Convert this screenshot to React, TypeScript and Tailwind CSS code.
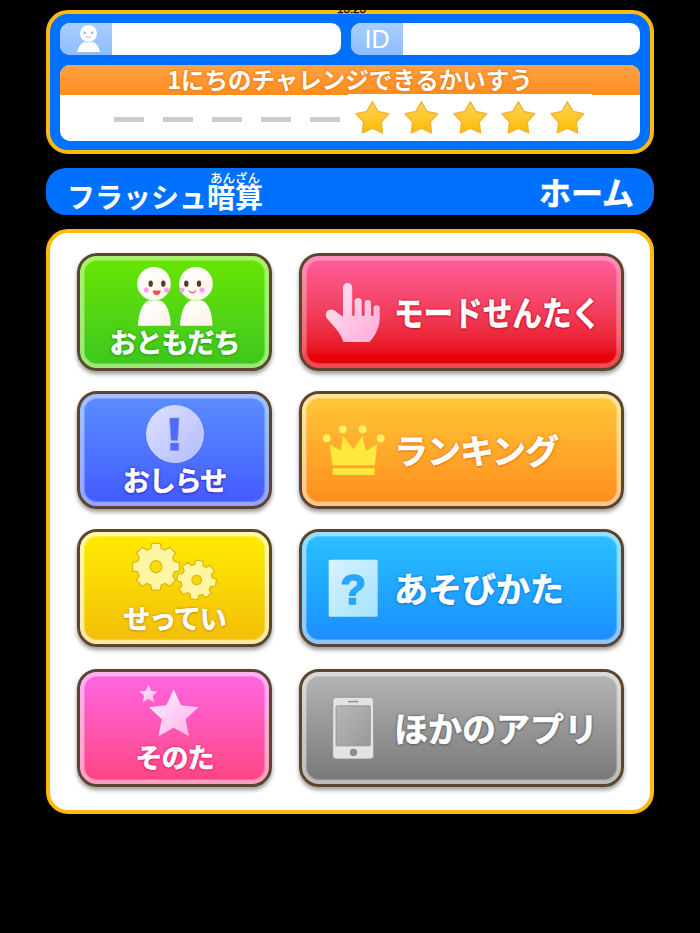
import React from "react";
import clsx from "clsx";

const starPoints = (cx: number, cy: number, r: number, inner = 0.5) =>
  Array.from({ length: 10 }, (_, i) => {
    const radius = i % 2 === 0 ? r : r * inner;
    const angle = (Math.PI / 5) * i - Math.PI / 2;
    return `${(cx + radius * Math.cos(angle)).toFixed(2)},${(cy + radius * Math.sin(angle)).toFixed(2)}`;
  }).join(" ");

const gearPath = (cx: number, cy: number, outer: number, root: number, hole: number, turn = 0) => {
  const points: string[] = [];
  for (let i = 0; i < 8; i++) {
    const mid = ((i * 45 + turn) * Math.PI) / 180;
    const corners = [[root, -0.28], [outer, -0.18], [outer, 0.18], [root, 0.28]];
    corners.forEach(([r, d]) => {
      points.push(`${(cx + r * Math.cos(mid + d)).toFixed(2)} ${(cy + r * Math.sin(mid + d)).toFixed(2)}`);
    });
  }
  return `M${points.join("L")}Z M${cx - hole} ${cy}a${hole} ${hole} 0 1 0 ${hole * 2} 0a${hole} ${hole} 0 1 0 ${-hole * 2} 0Z`;
};

const FriendsIcon = () => (
  <svg viewBox="84 260 181 68" className="h-[68px] w-[181px] shrink-0">
    <defs>
      <linearGradient id="friend" x1="0" y1="0" x2="1" y2="1">
        <stop offset="0.3" stopColor="#fffefc" />
        <stop offset="1" stopColor="#fdf1e2" />
      </linearGradient>
    </defs>
    <g fill="url(#friend)">
      <circle cx="154" cy="283.7" r="16.8" />
      <path d="M138 325.7C138.5 311 144 300.5 150 300.5h8.5C165 300.5 170.5 311 170.7 325.7Z" />
      <circle cx="196" cy="283.7" r="16.8" />
      <path d="M180 325.7C180.5 311 186 300.5 192 300.5h8.5C207 300.5 212.3 311 212.5 325.7Z" />
    </g>
    <g fill="#5c3a22">
      <ellipse cx="150.7" cy="283.7" rx="2.2" ry="3.1" />
      <ellipse cx="163.3" cy="283.7" rx="2.2" ry="3.1" />
      <ellipse cx="186.3" cy="283.7" rx="2.2" ry="3.1" />
      <ellipse cx="199" cy="283.7" rx="2.2" ry="3.1" />
    </g>
    <g fill="#f9a3e6">
      <circle cx="146.3" cy="290" r="2.6" />
      <circle cx="166.7" cy="290" r="2.6" />
      <circle cx="182" cy="290" r="2.6" />
      <circle cx="202" cy="290" r="2.6" />
    </g>
    <path d="M152.7 290.5h8c0 6.200-8 6.200-8 0Z" fill="#f4504c" />
    <path d="M189.3 291c1.500 2.200 4.800 2.200 6.300 0" fill="none" stroke="#f4504c" strokeWidth="1.2" strokeLinecap="round" />
  </svg>
);

const NoticeIcon = () => (
  <svg viewBox="84 398 181 68" className="h-[68px] w-[181px] shrink-0">
    <defs>
      <linearGradient id="notice" x1="0" y1="0" x2="1" y2="1">
        <stop offset="0" stopColor="#dde2ff" />
        <stop offset="1" stopColor="#b3bbff" />
      </linearGradient>
    </defs>
    <circle cx="175" cy="434" r="28.5" fill="url(#notice)" stroke="#d5dbff" strokeWidth="0.8" />
    <path d="M169.6 418h9.500l-1.400 22.500h-6.700ZM170.300 443h8.500v7.500h-8.500Z" fill="#4e6bff" stroke="#8896f0" strokeWidth="0.6" />
  </svg>
);

const GearsIcon = () => (
  <svg viewBox="84 536 181 68" className="h-[68px] w-[181px] shrink-0">
    <g fill="#fff6a4" stroke="#dfb414" strokeWidth="1.2" strokeLinejoin="round" fillRule="evenodd">
      <path d={gearPath(156, 566.7, 23.8, 19, 6)} />
      <path d={gearPath(196.7, 580, 19.8, 15.6, 4.8, 8)} />
    </g>
  </svg>
);

const OthersIcon = () => (
  <svg viewBox="84 676 181 68" className="h-[68px] w-[181px] shrink-0">
    <defs>
      <linearGradient id="others" x1="0" y1="0" x2="1" y2="1">
        <stop offset="0.2" stopColor="#ffe4fa" />
        <stop offset="1" stopColor="#ffafea" />
      </linearGradient>
    </defs>
    <polygon points={starPoints(173.7, 715.3, 26, 0.48)} fill="url(#others)" />
    <polygon points={starPoints(148.5, 694.4, 9.6, 0.48)} fill="url(#others)" />
  </svg>
);

const HandIcon = () => (
  <svg viewBox="306 260 84 104" className="h-[104px] w-[84px] shrink-0">
    <defs>
      <linearGradient id="hand" x1="0" y1="0" x2="1" y2="1">
        <stop offset="0.2" stopColor="#ffdcf0" />
        <stop offset="1" stopColor="#ffaad6" />
      </linearGradient>
    </defs>
    <path
      d="M343 316.5V287.500a4.600 4.600 0 0 1 9.200 0V315.800h2.400V301.500a3.600 3.600 0 0 1 7.200 0V315.800h2.800V303.300a3.200 3.200 0 0 1 6.400 0V315.800h2.600V308.300a3 3 0 0 1 6.100 0V318C379.500 328 375 336 369.500 342H343.500C341 335 338 331 334 326.500L327 318.500C324.500 314.500 326.500 309.500 331.500 309.500C336 310 339 315 343 316.500Z"
      fill="url(#hand)"
    />
  </svg>
);

const CrownIcon = () => (
  <svg viewBox="306 398 84 104" className="h-[104px] w-[84px] shrink-0">
    <g fill="#ffea3c" stroke="#f5b82c" strokeWidth="0.5">
      <path d="M329.3 444L340.500 450.500L343 435.500L353.300 449L362.500 435.500L366 450.500L377.300 444L375 465.500H332.500Z" />
      <path d="M332.6 468h42.200v7h-42.200Z" />
      <circle cx="326.7" cy="438.3" r="4.2" fill="#ffee66" />
      <circle cx="342.8" cy="429.3" r="4.2" fill="#ffee66" />
      <circle cx="362.7" cy="429.3" r="4.2" fill="#ffee66" />
      <circle cx="380.7" cy="438.3" r="4.2" fill="#ffee66" />
    </g>
  </svg>
);

const HelpIcon = () => (
  <svg viewBox="306 536 84 104" className="h-[104px] w-[84px] shrink-0">
    <defs>
      <linearGradient id="help" x1="0" y1="0" x2="1" y2="1">
        <stop offset="0" stopColor="#d8f3ff" />
        <stop offset="1" stopColor="#a4e2ff" />
      </linearGradient>
    </defs>
    <rect x="328.7" y="559.8" width="49" height="57" rx="1.5" fill="url(#help)" />
    <text x="353" y="603.5" textAnchor="middle" fontSize="42" fontWeight="bold" fill="#28a6ff" stroke="#28a6ff" strokeWidth="1.4" className="font-['Liberation_Sans',sans-serif]">
      ?
    </text>
  </svg>
);

const PhoneIcon = () => (
  <svg viewBox="306 676 84 104" className="h-[104px] w-[84px] shrink-0">
    <defs>
      <linearGradient id="screen" x1="0" y1="0" x2="1" y2="1">
        <stop offset="0" stopColor="#b8b8b8" />
        <stop offset="1" stopColor="#999999" />
      </linearGradient>
    </defs>
    <rect x="332.7" y="697.3" width="41" height="61.7" rx="3.5" fill="#e3e3e3" stroke="#8b8b8b" strokeWidth="0.8" />
    <rect x="336" y="705.8" width="34.3" height="40" rx="1" fill="url(#screen)" stroke="#8f8f8f" strokeWidth="0.8" />
    <rect x="348" y="700.8" width="10.3" height="1.8" rx="0.9" fill="#999999" />
    <circle cx="353.5" cy="752.5" r="3.7" fill="#8e8e8e" />
  </svg>
);

interface MenuButtonProps {
  label: string;
  icon: React.ReactNode;
  color: string;
  band: string;
  text: string;
  wide?: boolean;
}

const MenuButton: React.FC<MenuButtonProps> = ({ label, icon, color, band, text, wide }) => (
  <button className={clsx("h-[118px] rounded-[20px] border-[3px] border-[#5b452f] bg-linear-to-b shadow-[0_3px_4px_rgba(0,0,0,0.4)]", color)}>
    <span
      className={clsx(
        "flex h-full rounded-[17px] border-4 shadow-[inset_0_0_0_1px_rgba(255,255,255,0.2)]",
        band,
        wide ? "items-center" : "flex-col items-center"
      )}
    >
      {icon}
      <span
        className={clsx(
          "whitespace-nowrap font-bold text-white [-webkit-text-stroke:0.6px_white]",
          text,
          wide ? "ml-1 origin-left text-[34px] leading-[40px]" : "text-[27px] leading-[28px]"
        )}
      >
        {label}
      </span>
    </span>
  </button>
);

const buttons: MenuButtonProps[] = [
  {
    label: "おともだち",
    icon: <FriendsIcon />,
    color: "from-[#68e600] to-[#3cc61b]",
    band: "border-[#c6f5a0]/70",
    text: "tracking-[-1px] [text-shadow:0_0_2px_#249a08,0_0_3px_#249a08,0_1px_2px_#249a08]"
  },
  {
    label: "モードせんたく",
    icon: <HandIcon />,
    color: "from-[#ff5c98] from-5% to-[#e60008] to-90%",
    band: "border-white/30",
    text: "scale-x-[0.87] [text-shadow:0_0_2px_#b80c28,0_0_3px_#b80c28,0_1px_2px_#b80c28]",
    wide: true
  },
  {
    label: "おしらせ",
    icon: <NoticeIcon />,
    color: "from-[#5b8eff] to-[#4458ff]",
    band: "border-white/45",
    text: "tracking-[-1px] [text-shadow:0_0_2px_#3426d8,0_0_3px_#3426d8,0_1px_2px_#3426d8]"
  },
  {
    label: "ランキング",
    icon: <CrownIcon />,
    color: "from-[#ffc838] to-[#ff8b1c]",
    band: "border-white/50",
    text: "tracking-[-1px] [text-shadow:0_0_2px_#ec6c08,0_0_3px_#ec6c08,0_1px_2px_#ec6c08]",
    wide: true
  },
  {
    label: "せってい",
    icon: <GearsIcon />,
    color: "from-[#ffed00] to-[#f2bd08]",
    band: "border-white/65",
    text: "tracking-[-1px] [text-shadow:0_0_2px_#c98a00,0_0_3px_#c98a00,0_1px_2px_#c98a00]"
  },
  {
    label: "あそびかた",
    icon: <HelpIcon />,
    color: "from-[#2bc1ff] to-[#1d8cff]",
    band: "border-white/50",
    text: "[text-shadow:0_0_2px_#0b72dc,0_0_3px_#0b72dc,0_1px_2px_#0b72dc]",
    wide: true
  },
  {
    label: "そのた",
    icon: <OthersIcon />,
    color: "from-[#ff64e4] to-[#ff4280]",
    band: "border-white/50",
    text: "-mt-px tracking-[-1px] [text-shadow:0_0_2px_#e82070,0_0_3px_#e82070,0_1px_2px_#e82070]"
  },
  {
    label: "ほかのアプリ",
    icon: <PhoneIcon />,
    color: "from-[#b6b6b6] to-[#777777]",
    band: "border-white/50",
    text: "[text-shadow:0_0_2px_#5c5c5c,0_0_3px_#5c5c5c,0_1px_2px_#5c5c5c]",
    wide: true
  }
];

const Header: React.FC = () => (
  <header className="relative h-36 rounded-[22px] border-4 border-[#ffb90f] bg-[#0071ff] px-2.5 pt-[9px]">
    <span className="absolute -top-[11px] left-[287px] w-[29px] text-center font-['Liberation_Sans',sans-serif] text-[11.5px] leading-[12px] text-black [-webkit-text-stroke:0.3px_black]">
      13:23
    </span>
    <div className="flex gap-2.5">
      <div className="flex h-8 w-[281px] overflow-hidden rounded-[10px] bg-white">
        <div className="w-[52px] bg-linear-to-b from-[#a7cdff] to-[#8dbdfb]">
          <svg viewBox="60 23 52 32" className="h-8 w-[52px]">
            <circle cx="88.5" cy="33.4" r="8.5" fill="#fff" />
            <path d="M77 52C78.500 45 83 41.800 85.500 41.800h6C95 41.800 98.500 45 100 52Z" fill="#fff" />
            <circle cx="84.8" cy="32.8" r="1.2" fill="#8dbdfb" />
            <circle cx="92" cy="32.8" r="1.2" fill="#8dbdfb" />
            <path d="M86 36.300c1.500 1.500 3.500 1.500 5 0" fill="none" stroke="#8dbdfb" strokeWidth="1" />
            <path d="M83.500 41.300c3 1.500 7 1.500 10 0" fill="none" stroke="#b5d4fd" strokeWidth="0.8" />
          </svg>
        </div>
      </div>
      <div className="flex h-8 w-[289px] overflow-hidden rounded-[10px] bg-white">
        <div className="w-[52px] bg-linear-to-b from-[#a7cdff] to-[#8dbdfb] text-center font-['Liberation_Sans',sans-serif] text-[25px] leading-8 text-white">
          ID
        </div>
      </div>
    </div>

    <div className="mt-2.5 h-[76px] overflow-hidden rounded-[10px] bg-white">
      <div className="h-[30px] bg-linear-to-b from-[#ffa242] to-[#ff8c1c] text-center text-[23.5px] font-bold leading-[29px] text-white [text-shadow:0_0_2px_#e87408,0_0_3px_#e87408]">
        1にちのチャレンジできるかいすう
      </div>
      <div className="-mt-px flex h-[47px] items-center pl-[45px]">
        {[0, 1, 2, 3, 4].map((i) => (
          <div key={i} className="flex w-[48.8px] justify-center pt-1">
            <div className="h-[5px] w-[30px] bg-[#cbcbcb]"></div>
          </div>
        ))}
        <div className="-ml-px flex h-full w-[244px] bg-white">
          {[0, 1, 2, 3, 4].map((i) => (
            <svg key={i} viewBox="0 0 48.8 47" className="h-[47px] w-[48.8px]">
              <defs>
                <linearGradient id="gold" x1="0" y1="0" x2="0" y2="1">
                  <stop offset="0" stopColor="#ffd758" />
                  <stop offset="1" stopColor="#ffb800" />
                </linearGradient>
              </defs>
              <polygon points={starPoints(24.4, 25, 17.2, 0.54)} fill="url(#gold)" stroke="#f0b63a" strokeWidth="1.5" strokeLinejoin="round" />
            </svg>
          ))}
        </div>
      </div>
    </div>
  </header>
);

const App: React.FC = () => {
  return (
    <div className="h-[933px] w-[700px] overflow-hidden bg-black px-[46px] pt-2.5 font-['Noto_Sans_CJK_JP',sans-serif]">
      <Header />

      <div className="mt-3.5 flex h-[47px] justify-between rounded-[20px] bg-[#0071ff] pl-[21px] pr-5 font-bold text-white">
        <h1 className="flex items-end pb-[5px] text-[28px] leading-[27px]">
          <span>フラッシュ</span>
          <span className="flex flex-col items-center">
            <span className="text-[12.5px] font-medium leading-[11px]">あんざん</span>
            <span>暗算</span>
          </span>
        </h1>
        <span className="text-[32px] leading-[46px] [-webkit-text-stroke:0.5px_white]">ホーム</span>
      </div>

      <main className="mt-3.5 grid h-[585px] grid-cols-[195px_325px] grid-rows-[138px_138px_140px_118px] items-start gap-x-[27px] rounded-[22px] border-4 border-[#ffb90f] bg-white pl-[27px] pt-5">
        {buttons.map((button) => (
          <MenuButton key={button.label} {...button} />
        ))}
      </main>
    </div>
  );
};

export default App;
